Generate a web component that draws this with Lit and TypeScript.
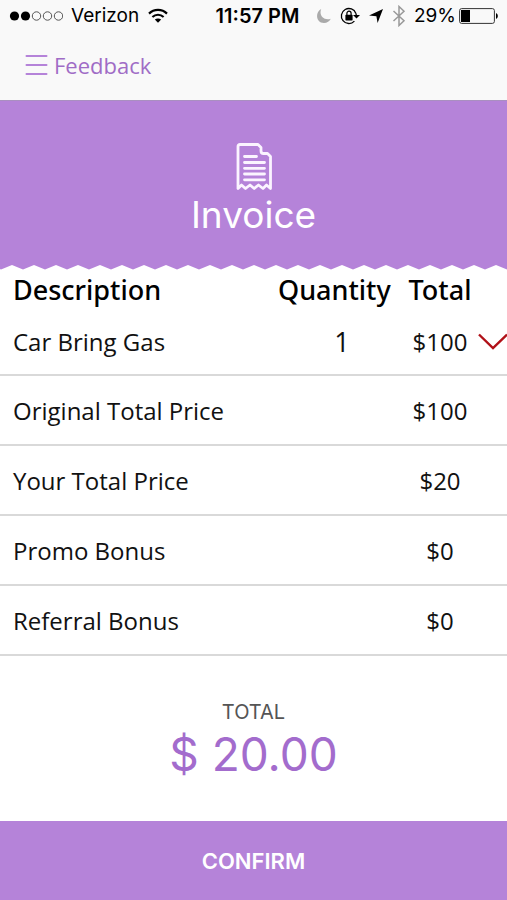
import { LitElement, html, css, svg } from "lit";
import { customElement, property, state } from "lit/decorators.js";

interface Line {
  label: string;
  quantity?: number;
  total: string;
  expandable?: boolean;
}

@customElement("status-bar")
export class StatusBar extends LitElement {
  static styles = css`
    :host {
      display: grid;
      grid-template-columns: 1fr auto 1fr;
      align-items: center;
      height: 32px;
      padding: 0 9px;
      font: 19px/32px Inter, sans-serif;
      color: #000;
    }
    .side {
      display: flex;
      align-items: center;
      gap: 8px;
    }
    .right {
      justify-content: flex-end;
    }
    .time {
      padding-left: 8px;
      font-weight: 600;
      font-size: 20px;
    }
    .battery {
      display: flex;
      align-items: center;
      gap: 3px;
    }
    svg {
      display: block;
      flex: none;
    }
  `;

  render() {
    return html`
      <div class="side">
        <svg width="54" height="12" viewBox="0 0 54 12" aria-label="Signal: 2 of 5">
          ${[0, 1, 2, 3, 4].map(
            (i) => svg`<circle cx=${5.5 + i * 11} cy="6" r=${i < 2 ? 4.6 : 4.2}
              fill=${i < 2 ? "#000" : "none"} stroke=${i < 2 ? "none" : "#444"} stroke-width="0.9" />`
          )}
        </svg>
        <span>Verizon</span>
        <svg width="22" height="16" viewBox="0 0 22 16" fill="none" stroke="#000" aria-label="Wi-Fi">
          <path d="M2 5.6C7 .6 15 .6 20 5.6" stroke-width="2.2" />
          <path d="M5.4 9C8.6 5.9 13.4 5.9 16.6 9" stroke-width="2.1" />
          <path d="M11 14.8 7.8 11.6C9.6 10 12.4 10 14.2 11.6Z" fill="#000" stroke="none" />
        </svg>
      </div>
      <span class="time">11:57 PM</span>
      <div class="side right">
        <svg width="16" height="16" viewBox="0 0 16 16" aria-label="Do not disturb">
          <path d="M5.2 1C-1 4-.4 15 8 15c3 0 5.600-1.500 6.800-4.200C8 13 2.600 7.600 5.200 1Z" fill="#aaa" />
        </svg>
        <svg width="20" height="18" viewBox="0 0 20 18" aria-label="Rotation lock">
          <path d="M15.900 6.400A7.500 7.500 0 1 0 14.400 14.100" fill="none" stroke="#000" stroke-width="1.300" />
          <path d="M15.900 6.400 16.500 9" stroke="#000" stroke-width="1.300" />
          <path d="M13 8h7l-3.500 3.500Z" />
          <rect x="5.400" y="7.800" width="7.200" height="5.600" rx="0.600" />
          <path d="M6.900 8V6.300a2.100 2.100 0 0 1 4.200 0V8" fill="none" stroke="#000" stroke-width="1.200" />
        </svg>
        <svg width="16" height="16" viewBox="0 0 16 16" aria-label="Location">
          <path d="M15 1 9.600 15 8.400 8.200 1 7.400Z" />
        </svg>
        <svg width="14" height="22" viewBox="0 0 14 22" fill="none" stroke="#999" stroke-width="1.500" aria-label="Bluetooth">
          <path d="M1.500 6 12 15.800 7 20.500V1.500L12 6.200 1.500 16" />
        </svg>
        <span class="battery">
          <span>29%</span>
          <svg width="39" height="16" viewBox="0 0 39 16" aria-label="Battery">
            <rect x="0.600" y="0.600" width="34.800" height="14.800" rx="2" fill="none" stroke="#333" />
            <rect x="2" y="2" width="9" height="12" />
            <path d="M37 5.200c2.400.4 2.400 5.200 0 5.600Z" />
          </svg>
        </span>
      </div>
    `;
  }
}

@customElement("invoice-table")
export class InvoiceTable extends LitElement {
  @property({ attribute: false }) lines: Line[] = [];
  @state() private open = false;

  static styles = css`
    table {
      width: 100%;
      table-layout: fixed;
      border-collapse: collapse;
      font: 24px/32px "Open Sans", sans-serif;
      color: #111;
    }
    .quantity {
      width: 128px;
    }
    .total {
      width: 68px;
    }
    .more {
      width: 33px;
    }
    th {
      height: 39px;
      padding: 0;
      font: 500 27px/39px "Noto Sans", sans-serif;
      text-align: left;
      color: #000;
    }
    td {
      height: 67px;
      padding: 1px 0 0;
      border-bottom: 2px solid #d9d9d9;
      text-align: center;
    }
    th:first-child,
    td:first-child {
      padding-left: 13px;
      text-align: left;
    }
    th.total {
      text-align: center;
    }
    td.quantity {
      font-size: 27px;
    }
    tbody tr:first-child td {
      height: 64px;
    }
    button {
      display: block;
      margin-left: auto;
      padding: 0;
      border: 0;
      background: none;
    }
    svg {
      display: block;
    }
  `;

  render() {
    return html`
      <table>
        <thead>
          <tr>
            <th scope="col">Description</th>
            <th scope="col" class="quantity">Quantity</th>
            <th scope="col" class="total">Total</th>
            <th class="more"></th>
          </tr>
        </thead>
        <tbody>
          ${this.lines.map(
            (line) => html`
              <tr>
                <td>${line.label}</td>
                <td class="quantity">${line.quantity ?? ""}</td>
                <td class="total">${line.total}</td>
                <td class="more">
                  ${line.expandable
                    ? html`<button
                        aria-label="Show details"
                        aria-expanded=${this.open ? "true" : "false"}
                        @click=${() => (this.open = !this.open)}
                      >
                        <svg width="29" height="18" viewBox="0 0 29 18" fill="none" stroke="#b01118" stroke-width="2.400">
                          <path d="M1 1.500 15 15 29 1.500" />
                        </svg>
                      </button>`
                    : ""}
                </td>
              </tr>
            `
          )}
        </tbody>
      </table>
    `;
  }
}

@customElement("app-root")
export class AppRoot extends LitElement {
  private lines: Line[] = [
    { label: "Car Bring Gas", quantity: 1, total: "$100", expandable: true },
    { label: "Original Total Price", total: "$100" },
    { label: "Your Total Price", total: "$20" },
    { label: "Promo Bonus", total: "$0" },
    { label: "Referral Bonus", total: "$0" },
  ];

  static styles = css`
    :host {
      display: flex;
      flex-direction: column;
      min-height: 100vh;
      background: #fff;
      font-family: Inter, sans-serif;
    }
    .top {
      background: #f9f9f9;
      border-bottom: 1px solid #a98fc0;
    }
    nav {
      display: flex;
      align-items: center;
      padding: 17px 25px 19px;
    }
    .menu {
      display: flex;
      align-items: center;
      gap: 6px;
      padding: 0;
      border: 0;
      background: none;
      font: 22px/32px "Open Sans", sans-serif;
      color: #a06cc6;
    }
    svg {
      display: block;
    }
    .hero {
      display: flex;
      flex-direction: column;
      align-items: center;
      padding: 41px 0 26px;
      background: #b583d9;
      color: #fff;
    }
    h1 {
      margin: 0;
      font-size: 37px;
      line-height: 48px;
      font-weight: 400;
    }
    .edge {
      width: 100%;
      height: 5px;
    }
    .sum {
      display: flex;
      flex-direction: column;
      flex: 1;
      align-items: center;
      justify-content: center;
      padding-top: 2px;
      color: #555;
      font-size: 20px;
      line-height: 28px;
    }
    .amount {
      font-size: 46px;
      line-height: 56px;
      color: #a36ccd;
    }
    .confirm {
      height: 79px;
      padding: 0;
      border: 0;
      background: #b583d9;
      color: #fff;
      font: 600 22px/32px Inter, sans-serif;
    }
  `;

  render() {
    return html`
      <header class="top">
        <status-bar></status-bar>
        <nav>
          <button class="menu">
            <svg width="23" height="22" viewBox="0 0 23 22" stroke="#b583d9" stroke-width="2" stroke-linecap="round">
              <path d="M1.500 2h20M1.500 11h20M1.500 20h20" />
            </svg>
            Feedback
          </button>
        </nav>
      </header>
      <section class="hero">
        <svg width="38" height="49" viewBox="0 0 38 49" fill="none" stroke="#fbf4ff" stroke-width="2.800" stroke-linejoin="round" stroke-linecap="round">
          <path d="M3 46.500V4.500Q3 2.500 5 2.500H23L26 5.500V9Q26 11.500 28.500 11.500H32.500L35.500 14.500V46.500L31.500 43 28 46.500 23.500 43 19.200 46.500 15 43 10.500 46.500 6.500 43Z" />
          <path d="M9.500 14.500h12M9.500 20.500h20M9.500 26.300h20M9.500 32h20M9.500 37.800h20" />
        </svg>
        <h1>Invoice</h1>
      </section>
      <svg class="edge" aria-hidden="true">
        <defs>
          <pattern id="teeth" x="1" width="22" height="5" patternUnits="userSpaceOnUse">
            <path d="M0 0H22V4.500L11 0 0 4.500Z" fill="#b583d9" />
          </pattern>
        </defs>
        <rect width="100%" height="5" fill="url(#teeth)" />
      </svg>
      <invoice-table .lines=${this.lines}></invoice-table>
      <section class="sum">
        <span>TOTAL</span>
        <span class="amount">$ 20.00</span>
      </section>
      <button class="confirm">CONFIRM</button>
    `;
  }
}
